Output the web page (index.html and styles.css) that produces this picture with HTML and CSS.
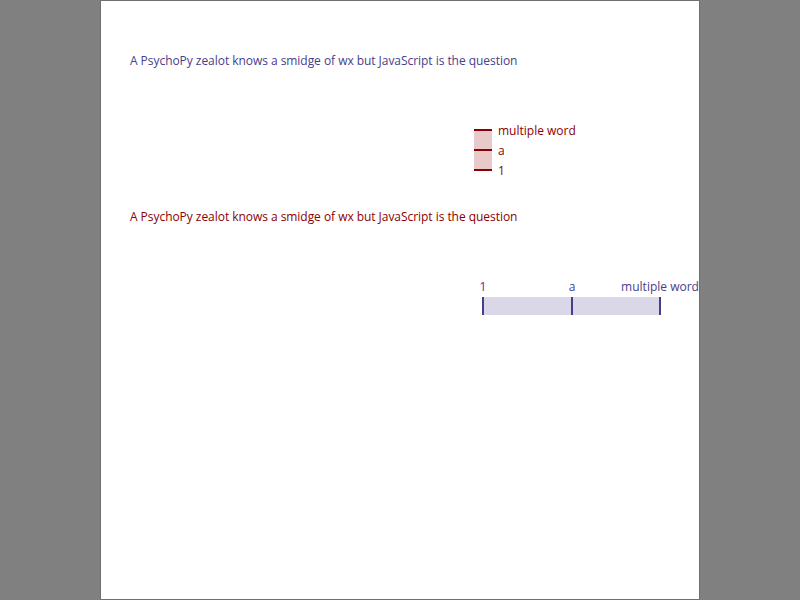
FILE: index.html
```html
<!DOCTYPE html>
<html lang="en">
<head>
  <meta charset="UTF-8" />
  <title>Slider test</title>
  <link rel="stylesheet" href="styles.css">
</head>
<body>
  <div id="canvas">
    <div class="texto azul" style="left: 29px; top: 51px;">A PsychoPy zealot knows a smidge of wx but JavaScript is the question</div>

    <div class="slider vertical" style="left: 373px; top: 128px;">
      <div class="trilho"></div>
      <div class="marca" style="top: 0px;"></div>
      <div class="marca" style="top: 20px;"></div>
      <div class="marca" style="top: 40px;"></div>
      <div class="rotulo" style="top: 2px;">multiple word</div>
      <div class="rotulo" style="top: 22px;">a</div>
      <div class="rotulo" style="top: 42px;">1</div>
    </div>

    <div class="texto vermelho" style="left: 29px; top: 207px;">A PsychoPy zealot knows a smidge of wx but JavaScript is the question</div>

    <div class="slider horizontal" style="left: 381px; top: 296px;">
      <div class="trilho"></div>
      <div class="marca" style="left: 0px;"></div>
      <div class="marca" style="left: 89px;"></div>
      <div class="marca" style="left: 177px;"></div>
      <div class="rotulo" style="left: 1px;">1</div>
      <div class="rotulo" style="left: 90px;">a</div>
      <div class="rotulo" style="left: 178px;">multiple word</div>
    </div>
  </div>
</body>
</html>
```
FILE: styles.css
```css
html, body {
  margin: 0;
  height: 100%;
  background: #808080;
}

body {
  font-family: "Open Sans", "Noto Sans", sans-serif;
}

#canvas {
  position: relative;
  width: 600px;
  height: 600px;
  margin: 0 auto;
  background: #fff;
  border: 1px solid #6f6f6f;
  box-sizing: border-box;
  overflow: hidden;
}

.texto {
  position: absolute;
  font-size: 12px;
  line-height: 18px;
  letter-spacing: -0.045px;
  white-space: nowrap;
}

.azul {
  color: #483d8b;
}

.vermelho {
  color: #8b0000;
}

.slider {
  position: absolute;
}

.slider .trilho {
  position: absolute;
}

.slider .marca {
  position: absolute;
}

.slider .rotulo {
  position: absolute;
  font-size: 12px;
  line-height: 16px;
  white-space: nowrap;
}

.vertical .trilho {
  left: 0;
  top: 1px;
  width: 18px;
  height: 40px;
  background: #e8caca;
}

.vertical .marca {
  left: 0;
  width: 18px;
  height: 2px;
  background: #8b0000;
}

.vertical .rotulo {
  left: 24px;
  color: #8b0000;
  transform: translateY(-50%);
}

.horizontal .trilho {
  left: 1px;
  top: 0;
  width: 177px;
  height: 18px;
  background: #d9d7e8;
}

.horizontal .marca {
  top: 0;
  width: 2px;
  height: 18px;
  background: #483d8b;
}

.horizontal .rotulo {
  top: -18px;
  color: #483d8b;
  transform: translateX(-50%);
}
```
